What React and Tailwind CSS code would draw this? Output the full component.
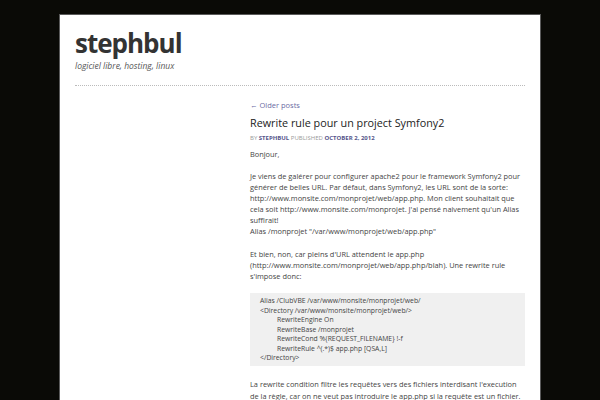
export default function App() {
  const f = { fontFamily: '"Open Sans", sans-serif' };
  return (
    <div className="w-[600px] h-[400px] overflow-hidden bg-[#0a0a06]" style={f}>
      <div className="ml-[59px] mt-[14px] w-[482px] h-[400px] bg-white border border-[#5a5a5a] border-b-0">
        <div className="px-[15px] pt-[12px]">
          <h1 className="text-[26px] leading-[32px] font-bold tracking-[-1px] text-[#333]">stephbul</h1>
          <p className="mt-[1px] text-[8.5px] leading-[12px] italic text-[#555]">logiciel libre, hosting, linux</p>
          <div className="mt-[13px] border-t border-dotted border-[#bbb]"></div>
        </div>
        <div className="ml-[190px] mr-[15px] mt-[13px] text-[#444]">
          <a className="block text-[7.5px] leading-[12px] text-[#6b6ba3]">← Older posts</a>
          <h2 className="mt-[4px] text-[10.8px] leading-[16px] text-[#222]">Rewrite rule pour un project Symfony2</h2>
          <div className="mt-[3px] text-[6px] leading-[9px] uppercase text-[#999]">
            by <span className="text-[#55558a] font-bold">stephbul</span> published <span className="text-[#55558a] font-bold">October 2, 2012</span>
          </div>
          <div className="text-[7.4px] leading-[11px]">
            <p className="mt-[6px]">Bonjour,</p>
            <p className="mt-[11px]">
              Je viens de galérer pour configurer apache2 pour le framework Symfony2 pour générer de belles URL. Par défaut, dans Symfony2, les URL sont de la sorte: http://www.monsite.com/monprojet/web/app.php. Mon client souhaitait que cela soit http://www.monsite.com/monprojet. J'ai pensé naivement qu'un Alias suffirait!
              <br />Alias /monprojet "/var/www/monprojet/web/app.php"
            </p>
            <p className="mt-[12px]">
              Et bien, non, car pleins d'URL attendent le app.php (http://www.monsite.com/monprojet/web/app.php/blah). Une rewrite rule s'impose donc:
            </p>
            <div className="mt-[11px] bg-[#f0f0f0] px-[10px] py-[3px] text-[6.8px] leading-[9.5px]">
              <div>Alias /ClubVBE /var/www/monsite/monprojet/web/</div>
              <div>&lt;Directory /var/www/monsite/monprojet/web/&gt;</div>
              <div className="pl-[17px]">RewriteEngine On</div>
              <div className="pl-[17px]">RewriteBase /monprojet</div>
              <div className="pl-[17px]">RewriteCond %{"{"}REQUEST_FILENAME{"}"} !-f</div>
              <div className="pl-[17px]">RewriteRule ^(.*)$ app.php [QSA,L]</div>
              <div>&lt;/Directory&gt;</div>
            </div>
            <p className="mt-[12px] leading-[12px]">
              La rewrite condition filtre les requêtes vers des fichiers interdisant l'execution de la règle, car on ne veut pas introduire le app.php si la requête est un fichier.
            </p>
          </div>
        </div>
      </div>
    </div>
  );
}
